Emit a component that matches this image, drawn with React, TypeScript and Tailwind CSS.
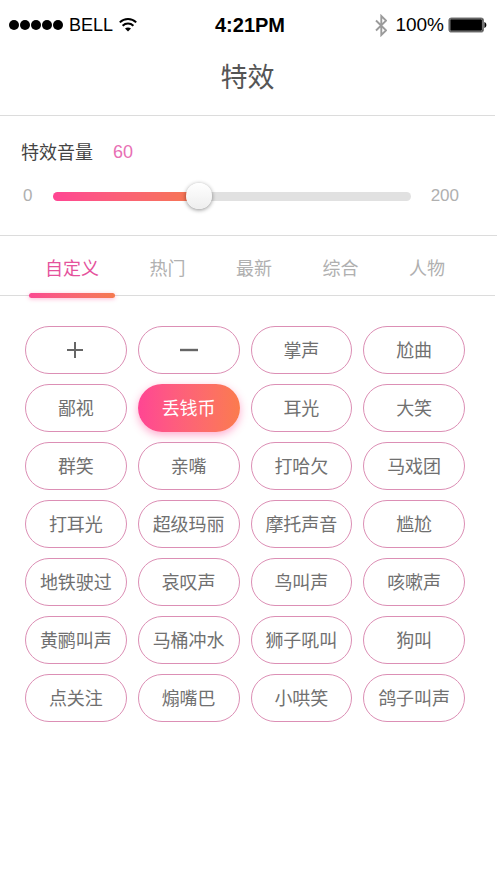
import React, { useState } from 'react'
import clsx from 'clsx'

type Tab = {
  id: string;
  title: string;
};

const tabs: Tab[] = [
  { id: 'custom', title: '自定义' },
  { id: 'hot', title: '热门' },
  { id: 'latest', title: '最新' },
  { id: 'mixed', title: '综合' },
  { id: 'people', title: '人物' },
];

const effects = [
  '掌声', '尬曲',
  '鄙视', '丢钱币', '耳光', '大笑',
  '群笑', '亲嘴', '打哈欠', '马戏团',
  '打耳光', '超级玛丽', '摩托声音', '尴尬',
  '地铁驶过', '哀叹声', '鸟叫声', '咳嗽声',
  '黄鹂叫声', '马桶冲水', '狮子吼叫', '狗叫',
  '点关注', '煽嘴巴', '小哄笑', '鸽子叫声',
];

const MAX_POSITION = 150;

const StatusBar = () => {
  return (
    <div className="grid grid-cols-[1fr_auto_1fr] items-center h-[50px] pl-[9px] pr-2 text-black">
      <div className="flex items-center">
        <div className="flex gap-px">
          {[0, 1, 2, 3, 4].map((i) => (
            <span key={i} className="size-[10px] rounded-full bg-black" />
          ))}
        </div>
        <span className="ml-1.5 text-[18px]">BELL</span>
        <svg className="ml-1.5 w-[18px] h-[14px]" viewBox="0 0 18 14" fill="none" stroke="black">
          <path d="M0.8 4.4C5.4 -0.1 12.6 -0.1 17.2 4.4" strokeWidth="2" />
          <path d="M3.6 7.7C6.7 4.8 11.3 4.8 14.4 7.7" strokeWidth="2" />
          <path d="M9 13.6L6 10.6C7.7 9.1 10.3 9.1 12 10.6Z" fill="black" stroke="none" />
        </svg>
      </div>
      <span className="pl-1 text-[20px] font-bold">4:21PM</span>
      <div className="flex items-center justify-end">
        <svg className="w-3 h-[23px]" viewBox="0 0 12 23" fill="none" stroke="#9b9b9b" strokeWidth="1.9">
          <path d="M1 6.5L11 16.3L6.3 21V2L11 6.7L1 16.5" />
        </svg>
        <span className="ml-2 text-[19px]">100%</span>
        <svg className="ml-1 w-[39px] h-4" viewBox="0 0 39 16">
          <rect x="1" y="1" width="34.4" height="14" rx="2.5" fill="black" stroke="#777" strokeWidth="1.2" />
          <rect x="2" y="2" width="32.4" height="12" rx="1.6" fill="black" stroke="#ccc" strokeWidth="0.6" />
          <path d="M36.4 5C39 6 39 10 36.4 11Z" fill="black" />
        </svg>
      </div>
    </div>
  );
};

const App: React.FC = () => {
  const [volume, setVolume] = useState(60);
  const [active, setActive] = useState('custom');
  const [selected, setSelected] = useState('丢钱币');

  const pill =
    'h-12 rounded-full flex items-center justify-center whitespace-nowrap text-[18px] cursor-pointer';
  const outline = 'border border-[#dc8fb5] text-[#707070]';

  return (
    <div className="min-h-screen bg-white font-['Liberation_Sans','Noto_Sans_CJK_SC',sans-serif]">
      <header className="mr-0.5 border-b border-[#dcdcdc]">
        <StatusBar />
        <h1 className="h-[65px] pt-2 text-center text-[27px] leading-[40px] text-[#555]">
          特效
        </h1>
      </header>

      <section className="h-[120px] pt-[22px] pl-[21px] pr-[38px] border-b border-[#dcdcdc]">
        <div className="flex items-center h-7 text-[#444]">
          <label htmlFor="volume" className="pt-0.5 text-[18px]">
            特效音量
          </label>
          <output htmlFor="volume" className="ml-5 text-[18px] text-[#e86fb4]">
            {volume}
          </output>
        </div>
        <div className="flex items-center mt-3 h-9 text-[17px] text-[#b0b0b0]">
          <span className="w-8 pl-0.5">0</span>
          <input
            id="volume"
            type="range"
            min={0}
            max={MAX_POSITION}
            value={volume}
            onChange={(e: any) => setVolume(Number(e.target.value))}
            style={{ backgroundSize: `${(volume / MAX_POSITION) * 100}% 100%` }}
            className="flex-1 min-w-0 h-[9px] appearance-none rounded-full bg-[#e1e1e1] bg-linear-to-r from-[#ff4593] to-[#f6774f] bg-no-repeat outline-none cursor-pointer [&::-webkit-slider-thumb]:appearance-none [&::-webkit-slider-thumb]:size-[26px] [&::-webkit-slider-thumb]:rounded-full [&::-webkit-slider-thumb]:bg-linear-to-b [&::-webkit-slider-thumb]:from-white [&::-webkit-slider-thumb]:to-[#eeeeee] [&::-webkit-slider-thumb]:shadow-[0_1px_4px_rgba(0,0,0,0.45)]"
          />
          <span className="ml-5">200</span>
        </div>
      </section>

      <nav className="mr-0.5 flex justify-between h-[60px] pl-[45px] pr-[50px] border-b border-[#dcdcdc]">
        {tabs.map((tab) => (
          <button
            key={tab.id}
            type="button"
            onClick={() => setActive(tab.id)}
            className={clsx(
              'relative h-full pt-2 text-[18px] cursor-pointer',
              active === tab.id ? 'text-[#e5529c]' : 'text-[#b0b0b0]'
            )}
          >
            {tab.title}
            {active === tab.id && (
              <span className="absolute -inset-x-4 -bottom-[3px] h-[5px] rounded-full bg-linear-to-r from-[#fb4791] to-[#f5794f] shadow-[0_1px_4px_rgba(255,69,147,0.4)]" />
            )}
          </button>
        ))}
      </nav>

      <main className="grid grid-cols-4 gap-x-[11px] gap-y-[10px] pt-[30px] pb-8 pl-[25px] pr-8">
        <button type="button" aria-label="添加" className={clsx(pill, outline)}>
          <svg className="size-[18px]" viewBox="0 0 18 18" stroke="#666" strokeWidth="2">
            <path d="M8 1V17M0 9H16" />
          </svg>
        </button>
        <button type="button" aria-label="删除" className={clsx(pill, outline)}>
          <svg className="size-[18px]" viewBox="0 0 18 18" stroke="#666" strokeWidth="2.4">
            <path d="M0 9H18" />
          </svg>
        </button>
        {effects.map((name) => (
          <button
            key={name}
            type="button"
            onClick={() => setSelected(name)}
            className={clsx(
              pill,
              'pt-0.5',
              selected === name
                ? 'bg-linear-to-r from-[#ff4593] to-[#fb7b4d] text-white shadow-[0_3px_8px_rgba(255,69,147,0.45)]'
                : outline
            )}
          >
            {name}
          </button>
        ))}
      </main>
    </div>
  );
};

export default App;
